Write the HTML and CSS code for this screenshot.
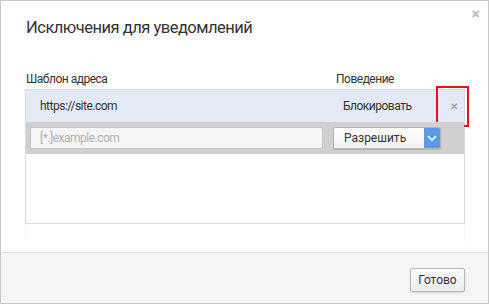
FILE: index.html
```html
<!DOCTYPE html>
<html lang="ru">
<head>
  <meta charset="UTF-8" />
  <title>Исключения для уведомлений</title>
  <link rel="stylesheet" href="styles.css">
</head>
<body>

  <div class="dialog">
    <span class="dialog-close">&#x2715;</span>

    <div class="dialog-body">
      <h1 class="title">Исключения для уведомлений</h1>

      <div class="list-head">
        <span class="col-pattern">Шаблон адреса</span>
        <span class="col-behavior">Поведение</span>
      </div>

      <div class="list">
        <div class="row selected">
          <span class="pattern">https://site.com</span>
          <span class="behavior">Блокировать</span>
          <span class="row-del">&#x2715;</span>
          <span class="highlight"></span>
        </div>
        <div class="row edit">
          <input type="text" class="pattern-input" placeholder="[*.]example.com" />
          <div class="select">
            <span class="select-text">Разрешить</span>
            <span class="select-arrow">
              <svg width="10" height="6" viewBox="0 0 10 6"><path d="M1 1l4 4 4-4" fill="none" stroke="#fff" stroke-width="1.6"/></svg>
            </span>
          </div>
        </div>
      </div>
      <div class="list-tail"></div>
    </div>

    <div class="footer">
      <button class="btn">Готово</button>
    </div>
  </div>

</body>
</html>
```

FILE: styles.css
```css
body {
  margin: 0;
  font-family: Roboto, 'Open Sans', sans-serif;
  color: #333;
  background: #fff;
}

.dialog {
  position: relative;
  width: 489px;
  height: 304px;
  box-sizing: border-box;
  border: 1px solid #c8c8c8;
  display: flex;
  flex-direction: column;
}

.dialog-close {
  position: absolute;
  top: 7px;
  right: 8px;
  font-size: 11px;
  color: #b5b5b5;
  font-weight: bold;
}

.dialog-body {
  flex: 1;
  padding: 0 23px 0 24px;
}

.title {
  margin: 17px 0 0 1px;
  font-size: 16.5px;
  font-weight: 400;
  letter-spacing: -0.5px;
  color: #333;
}

.list-head {
  display: flex;
  margin-top: 35px;
  font-size: 12px;
  letter-spacing: -0.5px;
  height: 17px;
}

.col-pattern {
  width: 310px;
  padding-left: 1px;
}

.list {
  border: 1px solid #d9d9d9;
  height: 133px;
}

.row {
  display: flex;
  align-items: center;
  height: 32px;
  font-size: 12px;
  position: relative;
}

.row.selected {
  background: #e4eaf5;
  letter-spacing: -0.5px;
}

.pattern {
  width: 303px;
  padding-left: 14px;
}

.behavior {
  width: 107px;
}

.row-del {
  color: #a0a0a0;
  font-size: 10px;
  font-weight: bold;
}

.highlight {
  position: absolute;
  left: 410px;
  top: -4px;
  width: 29px;
  height: 37px;
  border: 2px solid #e8101a;
}

.row.edit {
  background: #d0d0d0;
  padding: 0 4px;
}

.pattern-input {
  width: 293px;
  height: 22px;
  box-sizing: border-box;
  border: 1px solid #c4c4c4;
  border-radius: 2px;
  background: #f5f5f5;
  padding: 0 9px;
  font-family: inherit;
  font-size: 12px;
  letter-spacing: -0.5px;
  color: #333;
  margin: 0;
}

.pattern-input::placeholder {
  color: #b0b0b0;
}

.select {
  display: flex;
  margin-left: 10px;
  width: 108px;
  height: 22px;
  box-sizing: border-box;
  border: 1px solid #b5b5b5;
  border-radius: 2px;
  background: linear-gradient(#fdfdfd, #f2f2f2);
  box-shadow: 0 1px 1px rgba(0,0,0,0.15);
  overflow: hidden;
}

.select-text {
  flex: 1;
  padding-left: 10px;
  line-height: 20px;
}

.select-arrow {
  width: 16px;
  background: #5a9ae6;
  display: flex;
  align-items: center;
  justify-content: center;
}

.list-tail {
  height: 17px;
  border-left: 1px solid #f4f4f4;
  border-right: 1px solid #f4f4f4;
}

.footer {
  height: 50px;
  border-top: 1px solid #dcdcdc;
  background: #f5f5f5;
  display: flex;
  align-items: center;
  justify-content: flex-end;
  padding-right: 23px;
}

.btn {
  height: 24px;
  width: 55px;
  border: 1px solid #b9b9b9;
  border-radius: 2px;
  background: linear-gradient(#fafafa, #ececec);
  box-shadow: 0 1px 2px rgba(0,0,0,0.15);
  font-family: inherit;
  font-size: 12px;
  color: #333;
  padding: 0;
  margin-top: 3px;
}
```
